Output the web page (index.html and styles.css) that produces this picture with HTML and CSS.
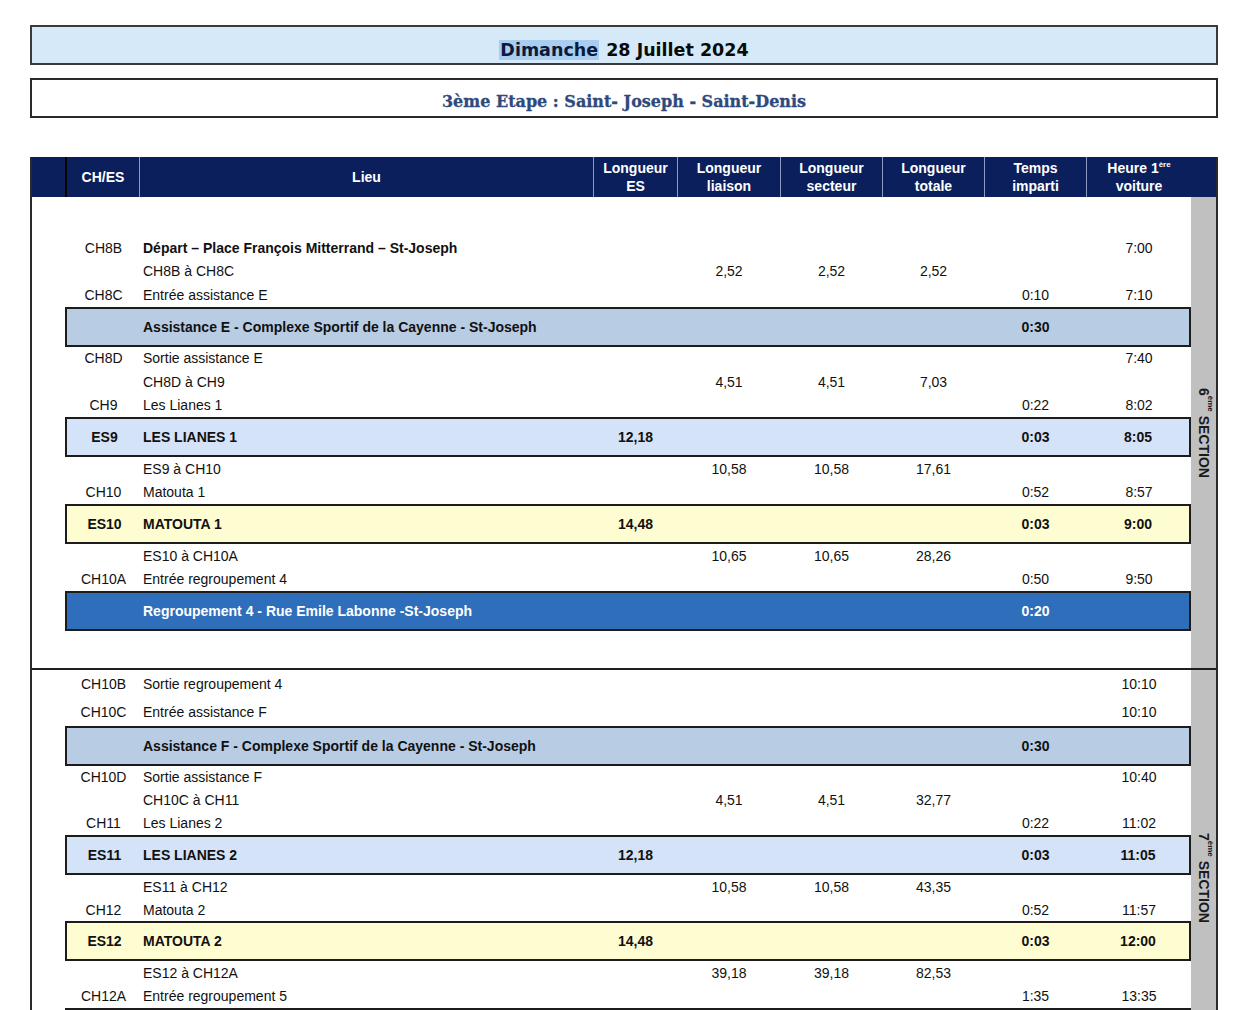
FILE: index.html
```html
<!DOCTYPE html>
<html lang="fr">
<head>
<meta charset="utf-8">
<title>Dimanche 28 Juillet 2024 - 3ème Etape</title>
<link rel="stylesheet" href="styles.css">
</head>
<body>
<div class="page">
  <div class="title-date"><span><span class="hl">Dimanche</span> 28 Juillet 2024</span></div>
  <div class="title-stage"><span>3ème Etape : Saint- Joseph - Saint-Denis</span></div>

  <div class="table">
    <div class="thead">
      <div class="th th-first"></div>
      <div class="th th-sep-dark"><span>CH/ES</span></div>
      <div class="th"><span>Lieu</span></div>
      <div class="th"><span>Longueur<br>ES</span></div>
      <div class="th"><span>Longueur<br>liaison</span></div>
      <div class="th"><span>Longueur<br>secteur</span></div>
      <div class="th"><span>Longueur<br>totale</span></div>
      <div class="th"><span>Temps<br>imparti</span></div>
      <div class="th"><span>Heure 1<sup class="sup">ère</sup><br>voiture</span></div>
      <div class="th th-strip"></div>
    </div>

    <div class="section section-one">
      <div class="rows">
        <div class="row"><span></span><span class="c">CH8B</span><span class="l b">Départ – Place François Mitterrand – St-Joseph</span><span></span><span></span><span></span><span></span><span></span><span class="c">7:00</span></div>
        <div class="row"><span></span><span></span><span class="l">CH8B à CH8C</span><span></span><span class="c">2,52</span><span class="c">2,52</span><span class="c">2,52</span><span></span><span></span></div>
        <div class="row"><span></span><span class="c">CH8C</span><span class="l">Entrée assistance E</span><span></span><span></span><span></span><span></span><span class="c">0:10</span><span class="c">7:10</span></div>
        <div class="row box box-assist"><span></span><span class="l">Assistance E - Complexe Sportif de la Cayenne - St-Joseph</span><span></span><span></span><span></span><span></span><span class="c">0:30</span><span></span></div>
        <div class="row"><span></span><span class="c">CH8D</span><span class="l">Sortie assistance E</span><span></span><span></span><span></span><span></span><span></span><span class="c">7:40</span></div>
        <div class="row"><span></span><span></span><span class="l">CH8D à CH9</span><span></span><span class="c">4,51</span><span class="c">4,51</span><span class="c">7,03</span><span></span><span></span></div>
        <div class="row"><span></span><span class="c">CH9</span><span class="l">Les Lianes 1</span><span></span><span></span><span></span><span></span><span class="c">0:22</span><span class="c">8:02</span></div>
        <div class="row box box-es"><span class="c">ES9</span><span class="l">LES LIANES 1</span><span class="c">12,18</span><span></span><span></span><span></span><span class="c">0:03</span><span class="c">8:05</span></div>
        <div class="row"><span></span><span></span><span class="l">ES9 à CH10</span><span></span><span class="c">10,58</span><span class="c">10,58</span><span class="c">17,61</span><span></span><span></span></div>
        <div class="row"><span></span><span class="c">CH10</span><span class="l">Matouta 1</span><span></span><span></span><span></span><span></span><span class="c">0:52</span><span class="c">8:57</span></div>
        <div class="row box box-yellow"><span class="c">ES10</span><span class="l">MATOUTA 1</span><span class="c">14,48</span><span></span><span></span><span></span><span class="c">0:03</span><span class="c">9:00</span></div>
        <div class="row"><span></span><span></span><span class="l">ES10 à CH10A</span><span></span><span class="c">10,65</span><span class="c">10,65</span><span class="c">28,26</span><span></span><span></span></div>
        <div class="row"><span></span><span class="c">CH10A</span><span class="l">Entrée regroupement 4</span><span></span><span></span><span></span><span></span><span class="c">0:50</span><span class="c">9:50</span></div>
        <div class="row box box-regroup"><span></span><span class="l">Regroupement 4 - Rue Emile Labonne -St-Joseph</span><span></span><span></span><span></span><span></span><span class="c">0:20</span><span></span></div>
      </div>
      <div class="strip"><span class="label">6<sup class="sup">ème</sup> SECTION</span></div>
    </div>

    <div class="section section-two">
      <div class="rows">
        <div class="row row-tall"><span></span><span class="c">CH10B</span><span class="l">Sortie regroupement 4</span><span></span><span></span><span></span><span></span><span></span><span class="c">10:10</span></div>
        <div class="row row-mid"><span></span><span class="c">CH10C</span><span class="l">Entrée assistance F</span><span></span><span></span><span></span><span></span><span></span><span class="c">10:10</span></div>
        <div class="row box box-assist"><span></span><span class="l">Assistance F - Complexe Sportif de la Cayenne - St-Joseph</span><span></span><span></span><span></span><span></span><span class="c">0:30</span><span></span></div>
        <div class="row"><span></span><span class="c">CH10D</span><span class="l">Sortie assistance F</span><span></span><span></span><span></span><span></span><span></span><span class="c">10:40</span></div>
        <div class="row"><span></span><span></span><span class="l">CH10C à CH11</span><span></span><span class="c">4,51</span><span class="c">4,51</span><span class="c">32,77</span><span></span><span></span></div>
        <div class="row"><span></span><span class="c">CH11</span><span class="l">Les Lianes 2</span><span></span><span></span><span></span><span></span><span class="c">0:22</span><span class="c">11:02</span></div>
        <div class="row box box-es"><span class="c">ES11</span><span class="l">LES LIANES 2</span><span class="c">12,18</span><span></span><span></span><span></span><span class="c">0:03</span><span class="c">11:05</span></div>
        <div class="row"><span></span><span></span><span class="l">ES11 à CH12</span><span></span><span class="c">10,58</span><span class="c">10,58</span><span class="c">43,35</span><span></span><span></span></div>
        <div class="row"><span></span><span class="c">CH12</span><span class="l">Matouta 2</span><span></span><span></span><span></span><span></span><span class="c">0:52</span><span class="c">11:57</span></div>
        <div class="row box box-yellow"><span class="c">ES12</span><span class="l">MATOUTA 2</span><span class="c">14,48</span><span></span><span></span><span></span><span class="c">0:03</span><span class="c">12:00</span></div>
        <div class="row"><span></span><span></span><span class="l">ES12 à CH12A</span><span></span><span class="c">39,18</span><span class="c">39,18</span><span class="c">82,53</span><span></span><span></span></div>
        <div class="row"><span></span><span class="c">CH12A</span><span class="l">Entrée regroupement 5</span><span></span><span></span><span></span><span></span><span class="c">1:35</span><span class="c">13:35</span></div>
        <div class="row box box-regroup"><span></span><span class="l"></span><span></span><span></span><span></span><span></span><span></span><span></span></div>
      </div>
      <div class="strip"><span class="label">7<sup class="sup">ème</sup> SECTION</span></div>
    </div>
  </div>
</div>
</body>
</html>
```

FILE: styles.css
```css
* { box-sizing: border-box; }

html, body {
  margin: 0;
  padding: 0;
  background: #ffffff;
}

body {
  font-family: "Liberation Sans", Arial, sans-serif;
  font-size: 14px;
  color: #111111;
}

.page {
  padding: 25px 28px 0 30px;
  width: 1246px;
}

.title-date {
  height: 40px;
  border: 2px solid #3a3a3a;
  background: #d5e9f8;
  display: flex;
  align-items: center;
  justify-content: center;
  font-family: "DejaVu Sans", sans-serif;
  font-weight: bold;
  font-size: 17.5px;
  color: #0a0a0a;
  padding-top: 9px;
}

.title-date .hl {
  background: #a9cdf1;
  color: #0b1a3a;
  padding: 0 1px;
  margin-right: 1px;
}

.title-stage {
  margin-top: 13px;
  height: 40px;
  border: 2px solid #2a2a2a;
  background: #ffffff;
  display: flex;
  align-items: center;
  justify-content: center;
  font-family: "DejaVu Serif", serif;
  font-weight: bold;
  font-size: 16px;
  color: #2e4a7c;
  padding-top: 6px;
  -webkit-text-stroke: 0.3px #2e4a7c;
}

.table {
  margin-top: 39px;
  border-left: 2px solid #2a2a2a;
  border-right: 2px solid #2a2a2a;
  width: 1188px;
}

.thead {
  display: grid;
  grid-template-columns: 33px 74px 454px 84px 103px 102px 102px 102px 105px 25px;
  height: 40px;
  background: #0b1f5c;
}

.th {
  display: flex;
  align-items: center;
  justify-content: center;
  text-align: center;
  color: #ffffff;
  font-weight: bold;
  font-size: 14px;
  line-height: 18px;
  border-left: 1px solid #8d9cc0;
}

.th-first { border-left: none; }
.th-sep-dark { border-left: 2px solid #050505; }
.th-strip { border-left: none; }

.sup {
  font-size: 8px;
  line-height: 0;
  vertical-align: 6px;
}

.section {
  display: grid;
  grid-template-columns: 1159px 25px;
}

.section-one .rows {
  padding: 39px 0 37px 0;
}

.section-two {
  border-top: 2px solid #1f1f1f;
}

.section-two .rows {
  padding: 0 0 39px 0;
}

.section-two .row { height: 23.2px; }
.section-two .row.row-tall { height: 28.5px; }
.section-two .row.row-mid { height: 27px; }
.section-two .row.box { height: 40px; }

.rows {
  display: flex;
  flex-direction: column;
}

.row {
  display: grid;
  grid-template-columns: 33px 74px 454px 84px 103px 102px 102px 102px 105px;
  height: 23.5px;
  align-items: center;
  line-height: 16px;
}

.row .c { text-align: center; }
.row > .c:nth-child(2) { padding-left: 3px; }
.row .l { padding-left: 4px; }
.row .b { font-weight: bold; }

.row > .c:nth-child(n+4) { padding-left: 1px; }

.row.box {
  margin-left: 33px;
  height: 40px;
  border: 2px solid #1c1c1c;
  grid-template-columns: 72px 454px 84px 103px 102px 102px 102px 103px;
  font-weight: bold;
}

.row.box > .c:nth-child(1) { padding-left: 3px; }
.row.box > .c:nth-child(n+3) { padding-left: 1px; }

.box-assist { background: #b8cce4; }
.box-es { background: #d4e3f8; }
.box-yellow { background: #fefdd2; }
.box-regroup {
  background: #2f6eba;
  color: #ffffff;
}

.strip {
  background: #c0c0c0;
  display: flex;
  align-items: center;
  justify-content: center;
}

.label {
  writing-mode: vertical-rl;
  font-weight: bold;
  font-size: 14px;
  color: #1a1a1a;
  white-space: nowrap;
}
```
